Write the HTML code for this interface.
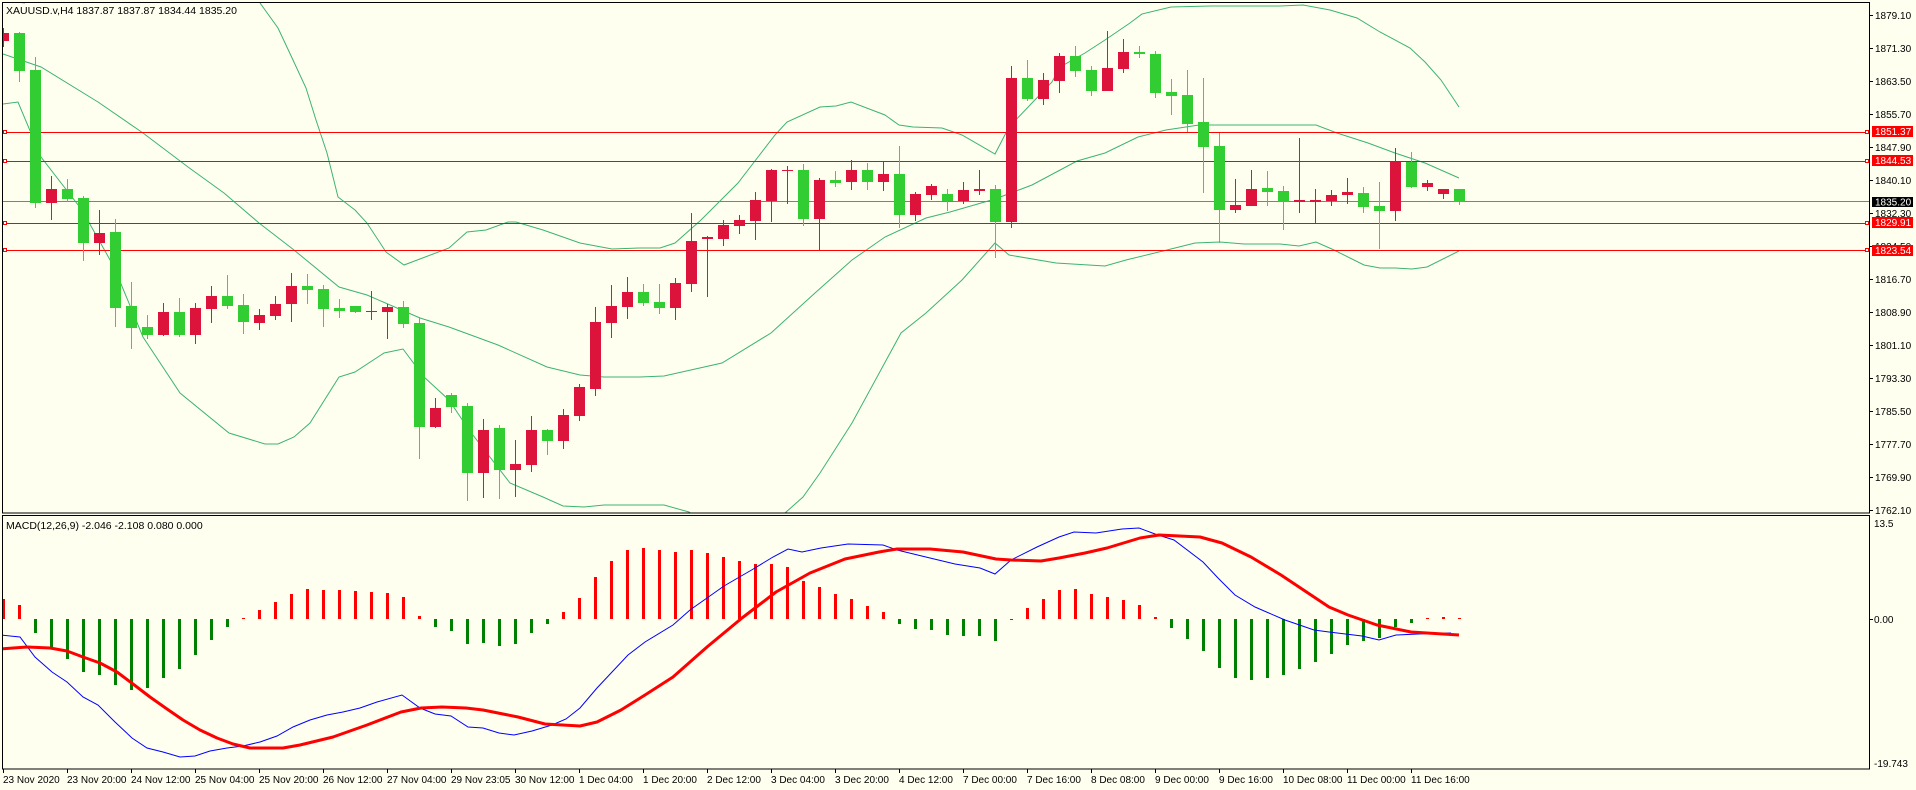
<!DOCTYPE html>
<html><head><meta charset="utf-8"><style>
html,body{margin:0;padding:0;background:#fffff0;}
svg{display:block;font-family:"Liberation Sans",sans-serif;font-size:10px;}
</style></head><body>
<svg width="1916" height="790" viewBox="0 0 1916 790" xmlns="http://www.w3.org/2000/svg">
<rect width="1916" height="790" fill="#fffff0"/>
<defs><clipPath id="cm"><rect x="3" y="3" width="1867" height="510"/></clipPath><clipPath id="cd"><rect x="3" y="516" width="1867" height="253"/></clipPath></defs>

<g clip-path="url(#cm)">
<g fill="none" stroke="#3cb371" stroke-width="1">
<polyline points="0,0 25,3"/>
<polyline points="260,3 278,28 293,60 306,88 316,120 327,153 338,197 355,210 367,223 386,252 404,265 449,248 467,232 486,230 508,222 516,222 543,230 580,243 612,249 640,248 660,248 675,243 701,220 738,183 758,157 775,135 787,122 820,107 836,106 851,102 885,115 899,125 913,127 942,128 962,135 995,154 1009,127 1032,103 1052,82 1060,67 1085,53 1105,40 1130,23 1142,14 1171,7 1211,6 1280,6 1303,5 1330,10 1357,18 1380,32 1410,48 1425,62 1441,80 1459,107"/>
<polyline points="3,54 41,67 98,102 143,133 188,167 224,193 259,223 294,250 339,287 367,295 420,318 449,327 498,345 547,367 580,375 604,377 640,377 664,376 722,363 771,333 815,293 852,260 885,237 926,218 950,212 995,199 1032,185 1077,161 1105,153 1138,137 1166,130 1199,125 1228,125 1280,125 1316,125 1337,133 1368,143 1395,153 1425,163 1459,178"/>
<polyline points="3,104 18,102 41,157 82,210 114,267 143,337 180,393 229,433 265,444 278,444 294,437 310,423 339,377 355,372 384,353 403,349 424,377 449,400 469,430 510,483 543,497 563,506 584,507 604,505 664,505 689,512 700,520"/>
<polyline points="780,520 785,513 803,497 820,473 852,423 901,333 926,313 962,280 995,243 1009,255 1056,263 1105,266 1126,260 1167,250 1195,243 1220,242 1244,244 1280,244 1299,246 1316,242 1334,250 1364,265 1380,268 1395,268 1412,269 1427,267 1459,251"/>
</g>
<rect x="3" y="132" width="1867" height="1" fill="#ff0000"/>
<rect x="3" y="161" width="1867" height="1" fill="#ff0000"/>
<rect x="3" y="201" width="1867" height="1" fill="#808080"/>
<rect x="3" y="223" width="1867" height="1" fill="#ff0000"/>
<rect x="3" y="250" width="1867" height="1" fill="#ff0000"/>
<g fill="#fff" stroke="#ff0000" stroke-width="1">
<rect x="3.5" y="130.5" width="3" height="3"/><rect x="3.5" y="159.5" width="3" height="3"/><rect x="3.5" y="221.5" width="3" height="3"/><rect x="3.5" y="248.5" width="3" height="3"/>
<rect x="1865.5" y="130.5" width="3" height="3"/><rect x="1865.5" y="159.5" width="3" height="3"/><rect x="1865.5" y="221.5" width="3" height="3"/><rect x="1865.5" y="248.5" width="3" height="3"/>
</g>
<g fill="#00ff00">
<rect x="19" y="32" width="1" height="50"/><rect x="35" y="57" width="1" height="151"/><rect x="67" y="179" width="1" height="23"/><rect x="83" y="196" width="1" height="65"/><rect x="115" y="219" width="1" height="108"/><rect x="131" y="282" width="1" height="67"/><rect x="147" y="315" width="1" height="24"/><rect x="179" y="298" width="1" height="39"/><rect x="227" y="275" width="1" height="34"/><rect x="243" y="294" width="1" height="40"/><rect x="307" y="274" width="1" height="30"/><rect x="323" y="285" width="1" height="42"/><rect x="339" y="299" width="1" height="19"/><rect x="355" y="306" width="1" height="7"/><rect x="403" y="301" width="1" height="27"/><rect x="419" y="317" width="1" height="142"/><rect x="451" y="393" width="1" height="20"/><rect x="467" y="403" width="1" height="98"/><rect x="499" y="425" width="1" height="74"/><rect x="547" y="429" width="1" height="26"/><rect x="643" y="284" width="1" height="22"/><rect x="659" y="284" width="1" height="30"/><rect x="803" y="164" width="1" height="62"/><rect x="835" y="171" width="1" height="16"/><rect x="867" y="163" width="1" height="27"/><rect x="899" y="146" width="1" height="82"/><rect x="947" y="189" width="1" height="22"/><rect x="995" y="185" width="1" height="73"/><rect x="1027" y="60" width="1" height="41"/><rect x="1075" y="46" width="1" height="31"/><rect x="1091" y="66" width="1" height="30"/><rect x="1139" y="46" width="1" height="12"/><rect x="1155" y="51" width="1" height="47"/><rect x="1171" y="79" width="1" height="36"/><rect x="1187" y="70" width="1" height="62"/><rect x="1203" y="78" width="1" height="115"/><rect x="1219" y="133" width="1" height="110"/><rect x="1267" y="171" width="1" height="35"/><rect x="1283" y="186" width="1" height="44"/><rect x="1363" y="187" width="1" height="26"/><rect x="1379" y="182" width="1" height="67"/><rect x="1411" y="152" width="1" height="36"/><rect x="1459" y="189" width="1" height="16"/>
</g>
<g fill="#32cd32">
<rect x="14" y="33" width="11" height="38"/><rect x="30" y="70" width="11" height="133"/><rect x="62" y="189" width="11" height="10"/><rect x="78" y="198" width="11" height="45"/><rect x="110" y="232" width="11" height="76"/><rect x="126" y="306" width="11" height="22"/><rect x="142" y="327" width="11" height="8"/><rect x="174" y="312" width="11" height="23"/><rect x="222" y="296" width="11" height="10"/><rect x="238" y="305" width="11" height="17"/><rect x="302" y="286" width="11" height="4"/><rect x="318" y="289" width="11" height="20"/><rect x="334" y="308" width="11" height="3"/><rect x="350" y="306" width="11" height="6"/><rect x="398" y="307" width="11" height="17"/><rect x="414" y="323" width="11" height="104"/><rect x="446" y="395" width="11" height="12"/><rect x="462" y="406" width="11" height="67"/><rect x="494" y="428" width="11" height="42"/><rect x="542" y="430" width="11" height="11"/><rect x="638" y="292" width="11" height="11"/><rect x="654" y="302" width="11" height="6"/><rect x="798" y="170" width="11" height="49"/><rect x="830" y="180" width="11" height="3"/><rect x="862" y="170" width="11" height="12"/><rect x="894" y="174" width="11" height="41"/><rect x="942" y="194" width="11" height="7"/><rect x="990" y="189" width="11" height="33"/><rect x="1022" y="78" width="11" height="21"/><rect x="1070" y="56" width="11" height="15"/><rect x="1086" y="70" width="11" height="21"/><rect x="1134" y="52" width="11" height="2"/><rect x="1150" y="54" width="11" height="39"/><rect x="1166" y="92" width="11" height="4"/><rect x="1182" y="95" width="11" height="29"/><rect x="1198" y="122" width="11" height="25"/><rect x="1214" y="146" width="11" height="64"/><rect x="1262" y="188" width="11" height="4"/><rect x="1278" y="191" width="11" height="11"/><rect x="1358" y="193" width="11" height="14"/><rect x="1374" y="206" width="11" height="5"/><rect x="1406" y="162" width="11" height="25"/><rect x="1454" y="189" width="11" height="13"/>
</g>
<g fill="#dc143c">
<rect x="3" y="28" width="1" height="19"/><rect x="-2" y="33" width="11" height="8"/>
<rect x="51" y="176" width="1" height="44"/><rect x="46" y="189" width="11" height="14"/>
<rect x="99" y="210" width="1" height="45"/><rect x="94" y="233" width="11" height="10"/>
<rect x="163" y="303" width="1" height="33"/><rect x="158" y="312" width="11" height="23"/>
<rect x="195" y="303" width="1" height="41"/><rect x="190" y="308" width="11" height="27"/>
<rect x="211" y="286" width="1" height="37"/><rect x="206" y="296" width="11" height="13"/>
<rect x="259" y="309" width="1" height="21"/><rect x="254" y="315" width="11" height="8"/>
<rect x="275" y="296" width="1" height="24"/><rect x="270" y="304" width="11" height="12"/>
<rect x="291" y="273" width="1" height="49"/><rect x="286" y="286" width="11" height="18"/>
<rect x="371" y="291" width="1" height="29"/><rect x="366" y="311" width="11" height="1"/>
<rect x="387" y="304" width="1" height="35"/><rect x="382" y="307" width="11" height="5"/>
<rect x="435" y="398" width="1" height="30"/><rect x="430" y="408" width="11" height="19"/>
<rect x="483" y="419" width="1" height="79"/><rect x="478" y="430" width="11" height="43"/>
<rect x="515" y="440" width="1" height="57"/><rect x="510" y="464" width="11" height="6"/>
<rect x="531" y="416" width="1" height="56"/><rect x="526" y="430" width="11" height="35"/>
<rect x="563" y="409" width="1" height="40"/><rect x="558" y="415" width="11" height="26"/>
<rect x="579" y="384" width="1" height="37"/><rect x="574" y="387" width="11" height="29"/>
<rect x="595" y="307" width="1" height="89"/><rect x="590" y="322" width="11" height="67"/>
<rect x="611" y="285" width="1" height="53"/><rect x="606" y="306" width="11" height="17"/>
<rect x="627" y="277" width="1" height="42"/><rect x="622" y="292" width="11" height="15"/>
<rect x="675" y="278" width="1" height="42"/><rect x="670" y="283" width="11" height="25"/>
<rect x="691" y="213" width="1" height="79"/><rect x="686" y="241" width="11" height="43"/>
<rect x="707" y="236" width="1" height="61"/><rect x="702" y="237" width="11" height="2"/>
<rect x="723" y="220" width="1" height="26"/><rect x="718" y="225" width="11" height="14"/>
<rect x="739" y="215" width="1" height="19"/><rect x="734" y="220" width="11" height="6"/>
<rect x="755" y="192" width="1" height="48"/><rect x="750" y="200" width="11" height="21"/>
<rect x="771" y="169" width="1" height="53"/><rect x="766" y="170" width="11" height="31"/>
<rect x="787" y="166" width="1" height="38"/><rect x="782" y="170" width="11" height="1"/>
<rect x="819" y="178" width="1" height="72"/><rect x="814" y="180" width="11" height="39"/>
<rect x="851" y="160" width="1" height="30"/><rect x="846" y="170" width="11" height="12"/>
<rect x="883" y="162" width="1" height="29"/><rect x="878" y="174" width="11" height="8"/>
<rect x="915" y="192" width="1" height="29"/><rect x="910" y="194" width="11" height="21"/>
<rect x="931" y="184" width="1" height="16"/><rect x="926" y="186" width="11" height="9"/>
<rect x="963" y="182" width="1" height="22"/><rect x="958" y="190" width="11" height="11"/>
<rect x="979" y="170" width="1" height="25"/><rect x="974" y="189" width="11" height="2"/>
<rect x="1011" y="66" width="1" height="162"/><rect x="1006" y="78" width="11" height="144"/>
<rect x="1043" y="73" width="1" height="32"/><rect x="1038" y="80" width="11" height="19"/>
<rect x="1059" y="53" width="1" height="40"/><rect x="1054" y="56" width="11" height="25"/>
<rect x="1107" y="31" width="1" height="60"/><rect x="1102" y="68" width="11" height="23"/>
<rect x="1123" y="39" width="1" height="34"/><rect x="1118" y="52" width="11" height="17"/>
<rect x="1235" y="179" width="1" height="34"/><rect x="1230" y="205" width="11" height="5"/>
<rect x="1251" y="170" width="1" height="36"/><rect x="1246" y="189" width="11" height="17"/>
<rect x="1299" y="138" width="1" height="75"/><rect x="1294" y="200" width="11" height="2"/>
<rect x="1315" y="189" width="1" height="34"/><rect x="1310" y="200" width="11" height="2"/>
<rect x="1331" y="190" width="1" height="16"/><rect x="1326" y="195" width="11" height="6"/>
<rect x="1347" y="178" width="1" height="26"/><rect x="1342" y="192" width="11" height="3"/>
<rect x="1395" y="148" width="1" height="73"/><rect x="1390" y="162" width="11" height="49"/>
<rect x="1427" y="180" width="1" height="11"/><rect x="1422" y="183" width="11" height="4"/>
<rect x="1443" y="189" width="1" height="10"/><rect x="1438" y="189" width="11" height="5"/>
</g>
</g>

<g clip-path="url(#cd)">
<g fill="#ff0000">
<rect x="2" y="599" width="3" height="20"/><rect x="18" y="605" width="3" height="14"/>
<rect x="242" y="618" width="3" height="1"/><rect x="258" y="610" width="3" height="9"/><rect x="274" y="602" width="3" height="17"/><rect x="290" y="594" width="3" height="25"/><rect x="306" y="589" width="3" height="30"/><rect x="322" y="590" width="3" height="29"/><rect x="338" y="590" width="3" height="29"/><rect x="354" y="591" width="3" height="28"/><rect x="370" y="592" width="3" height="27"/><rect x="386" y="593" width="3" height="26"/><rect x="402" y="597" width="3" height="22"/><rect x="418" y="616" width="3" height="3"/>
<rect x="562" y="612" width="3" height="7"/><rect x="578" y="598" width="3" height="21"/><rect x="594" y="577" width="3" height="42"/><rect x="610" y="561" width="3" height="58"/><rect x="626" y="550" width="3" height="69"/><rect x="642" y="548" width="3" height="71"/><rect x="658" y="550" width="3" height="69"/><rect x="674" y="552" width="3" height="67"/><rect x="690" y="550" width="3" height="69"/><rect x="706" y="553" width="3" height="66"/><rect x="722" y="557" width="3" height="62"/><rect x="738" y="561" width="3" height="58"/><rect x="754" y="564" width="3" height="55"/><rect x="770" y="564" width="3" height="55"/><rect x="786" y="567" width="3" height="52"/><rect x="802" y="581" width="3" height="38"/><rect x="818" y="587" width="3" height="32"/><rect x="834" y="594" width="3" height="25"/><rect x="850" y="599" width="3" height="20"/><rect x="866" y="606" width="3" height="13"/><rect x="882" y="612" width="3" height="7"/>
<rect x="1026" y="608" width="3" height="11"/><rect x="1042" y="599" width="3" height="20"/><rect x="1058" y="590" width="3" height="29"/><rect x="1074" y="589" width="3" height="30"/><rect x="1090" y="594" width="3" height="25"/><rect x="1106" y="597" width="3" height="22"/><rect x="1122" y="600" width="3" height="19"/><rect x="1138" y="605" width="3" height="14"/><rect x="1154" y="617" width="3" height="2"/>
<rect x="1426" y="618" width="3" height="1"/><rect x="1442" y="617" width="3" height="2"/><rect x="1458" y="618" width="3" height="1"/>
</g>
<g fill="#008000">
<rect x="34" y="619" width="3" height="14"/><rect x="50" y="619" width="3" height="30"/><rect x="66" y="619" width="3" height="40"/><rect x="82" y="619" width="3" height="53"/><rect x="98" y="619" width="3" height="56"/><rect x="114" y="619" width="3" height="66"/><rect x="130" y="619" width="3" height="71"/><rect x="146" y="619" width="3" height="69"/><rect x="162" y="619" width="3" height="59"/><rect x="178" y="619" width="3" height="50"/><rect x="194" y="619" width="3" height="36"/><rect x="210" y="619" width="3" height="21"/><rect x="226" y="619" width="3" height="8"/>
<rect x="434" y="619" width="3" height="8"/><rect x="450" y="619" width="3" height="12"/><rect x="466" y="619" width="3" height="25"/><rect x="482" y="619" width="3" height="24"/><rect x="498" y="619" width="3" height="27"/><rect x="514" y="619" width="3" height="25"/><rect x="530" y="619" width="3" height="14"/><rect x="546" y="619" width="3" height="5"/>
<rect x="898" y="619" width="3" height="5"/><rect x="914" y="619" width="3" height="10"/><rect x="930" y="619" width="3" height="11"/><rect x="946" y="619" width="3" height="16"/><rect x="962" y="619" width="3" height="17"/><rect x="978" y="619" width="3" height="17"/><rect x="994" y="619" width="3" height="22"/><rect x="1010" y="619" width="3" height="1"/>
<rect x="1170" y="619" width="3" height="9"/><rect x="1186" y="619" width="3" height="20"/><rect x="1202" y="619" width="3" height="32"/><rect x="1218" y="619" width="3" height="49"/><rect x="1234" y="619" width="3" height="59"/><rect x="1250" y="619" width="3" height="61"/><rect x="1266" y="619" width="3" height="59"/><rect x="1282" y="619" width="3" height="56"/><rect x="1298" y="619" width="3" height="50"/><rect x="1314" y="619" width="3" height="43"/><rect x="1330" y="619" width="3" height="35"/><rect x="1346" y="619" width="3" height="26"/><rect x="1362" y="619" width="3" height="22"/><rect x="1378" y="619" width="3" height="19"/><rect x="1394" y="619" width="3" height="8"/><rect x="1410" y="619" width="3" height="4"/>
</g>
<polyline fill="none" stroke="#0000ff" stroke-width="1" points="0,635 20,637 35,657 52,672 67,682 83,697 98,705 115,722 132,738 147,748 163,752 180,757 195,756 210,751 227,748 243,746 260,742 277,736 293,727 310,720 327,715 343,712 360,708 377,702 402,695 420,708 435,714 451,716 468,727 483,728 499,733 514,735 532,731 552,725 566,719 580,708 597,688 628,655 645,642 673,625 690,610 707,598 724,586 755,568 773,557 788,549 802,552 821,548 848,544 883,545 897,550 930,558 955,564 980,568 995,574 1011,560 1037,547 1059,537 1074,532 1096,533 1122,529 1139,528 1155,534 1174,540 1203,562 1218,578 1235,595 1255,607 1285,620 1314,630 1329,632 1362,636 1379,640 1396,635 1418,634 1451,633"/>
<polyline fill="none" stroke="#ff0000" stroke-width="3" stroke-linejoin="round" points="0,649 27,647 50,648 67,651 83,657 100,663 117,672 133,684 150,697 167,709 183,720 200,730 217,738 233,744 250,748 283,748 300,745 333,737 367,725 401,712 421,708 442,707 466,708 483,710 518,717 545,724 580,726 597,722 621,710 645,695 673,677 707,647 742,618 776,592 810,573 845,559 879,552 897,549 930,549 963,552 996,559 1011,560 1041,561 1059,558 1085,553 1107,548 1140,538 1159,535 1200,537 1222,543 1251,557 1281,575 1311,595 1329,607 1348,615 1377,625 1411,632 1459,635"/>
</g>

<g fill="none" stroke="#000" stroke-width="1">
<rect x="2.5" y="2.5" width="1867" height="510.5"/>
<rect x="2.5" y="515.5" width="1867" height="253.5"/>
</g>

<text x="6" y="14" fill="#000" font-size="10.5">XAUUSD.v,H4  1837.87 1837.87 1834.44 1835.20</text>
<text x="6" y="529" fill="#000" font-size="10.5">MACD(12,26,9) -2.046 -2.108 0.080 0.000</text>

<g fill="#000">
<rect x="1870" y="15" width="3" height="1"/><rect x="1870" y="48" width="3" height="1"/><rect x="1870" y="81" width="3" height="1"/><rect x="1870" y="114" width="3" height="1"/><rect x="1870" y="147" width="3" height="1"/><rect x="1870" y="180" width="3" height="1"/><rect x="1870" y="213" width="3" height="1"/><rect x="1870" y="246" width="3" height="1"/><rect x="1870" y="279" width="3" height="1"/><rect x="1870" y="312" width="3" height="1"/><rect x="1870" y="345" width="3" height="1"/><rect x="1870" y="378" width="3" height="1"/><rect x="1870" y="411" width="3" height="1"/><rect x="1870" y="444" width="3" height="1"/><rect x="1870" y="477" width="3" height="1"/><rect x="1870" y="510" width="3" height="1"/>
<rect x="1870" y="619" width="3" height="1"/>
<text x="1875" y="19">1879.10</text><text x="1875" y="52">1871.30</text><text x="1875" y="85">1863.50</text><text x="1875" y="118">1855.70</text><text x="1875" y="151">1847.90</text><text x="1875" y="184">1840.10</text><text x="1875" y="217">1832.30</text><text x="1875" y="250">1824.50</text><text x="1875" y="283">1816.70</text><text x="1875" y="316">1808.90</text><text x="1875" y="349">1801.10</text><text x="1875" y="382">1793.30</text><text x="1875" y="415">1785.50</text><text x="1875" y="448">1777.70</text><text x="1875" y="481">1769.90</text><text x="1875" y="514">1762.10</text>
<text x="1874" y="527">13.5</text><text x="1874" y="623">0.00</text><text x="1874" y="767">-19.743</text>
</g>
<rect x="1872" y="126" width="41" height="11" fill="#ff0000"/><text x="1875" y="135" fill="#fff">1851.37</text>
<rect x="1872" y="155" width="41" height="11" fill="#ff0000"/><text x="1875" y="164" fill="#fff">1844.53</text>
<rect x="1872" y="197" width="41" height="10" fill="#000"/><text x="1875" y="205.5" fill="#fff">1835.20</text>
<rect x="1872" y="217" width="41" height="11" fill="#ff0000"/><text x="1875" y="226" fill="#fff">1829.91</text>
<rect x="1872" y="245" width="41" height="11" fill="#ff0000"/><text x="1875" y="254" fill="#fff">1823.54</text>

<g fill="#000">
<rect x="3" y="769" width="1" height="4"/><rect x="67" y="769" width="1" height="4"/><rect x="131" y="769" width="1" height="4"/><rect x="195" y="769" width="1" height="4"/><rect x="259" y="769" width="1" height="4"/><rect x="323" y="769" width="1" height="4"/><rect x="387" y="769" width="1" height="4"/><rect x="451" y="769" width="1" height="4"/><rect x="515" y="769" width="1" height="4"/><rect x="579" y="769" width="1" height="4"/><rect x="643" y="769" width="1" height="4"/><rect x="707" y="769" width="1" height="4"/><rect x="771" y="769" width="1" height="4"/><rect x="835" y="769" width="1" height="4"/><rect x="899" y="769" width="1" height="4"/><rect x="963" y="769" width="1" height="4"/><rect x="1027" y="769" width="1" height="4"/><rect x="1091" y="769" width="1" height="4"/><rect x="1155" y="769" width="1" height="4"/><rect x="1219" y="769" width="1" height="4"/><rect x="1283" y="769" width="1" height="4"/><rect x="1347" y="769" width="1" height="4"/><rect x="1411" y="769" width="1" height="4"/>
<text x="3" y="783">23 Nov 2020</text><text x="67" y="783">23 Nov 20:00</text><text x="131" y="783">24 Nov 12:00</text><text x="195" y="783">25 Nov 04:00</text><text x="259" y="783">25 Nov 20:00</text><text x="323" y="783">26 Nov 12:00</text><text x="387" y="783">27 Nov 04:00</text><text x="451" y="783">29 Nov 23:05</text><text x="515" y="783">30 Nov 12:00</text><text x="579" y="783">1 Dec 04:00</text><text x="643" y="783">1 Dec 20:00</text><text x="707" y="783">2 Dec 12:00</text><text x="771" y="783">3 Dec 04:00</text><text x="835" y="783">3 Dec 20:00</text><text x="899" y="783">4 Dec 12:00</text><text x="963" y="783">7 Dec 00:00</text><text x="1027" y="783">7 Dec 16:00</text><text x="1091" y="783">8 Dec 08:00</text><text x="1155" y="783">9 Dec 00:00</text><text x="1219" y="783">9 Dec 16:00</text><text x="1283" y="783">10 Dec 08:00</text><text x="1347" y="783">11 Dec 00:00</text><text x="1411" y="783">11 Dec 16:00</text>
</g>
</svg>
</body></html>
